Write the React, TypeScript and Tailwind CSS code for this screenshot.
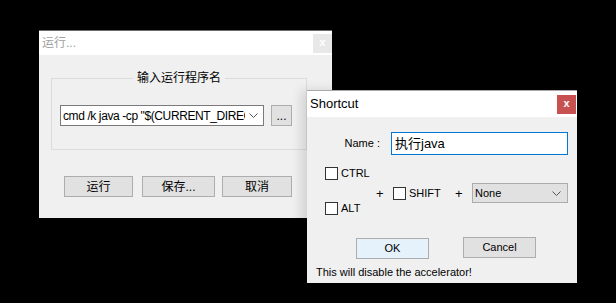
import { ReactNode } from "react"

const font = { fontFamily: '"Liberation Sans", "Noto Sans CJK SC", sans-serif' }

function Chevron() {
  return (
    <svg width="9" height="5" viewBox="0 0 9 5" className="shrink-0">
      <polyline points="0.5,0.5 4.5,4.5 8.5,0.5" fill="none" stroke="#555" strokeWidth="1" />
    </svg>
  )
}

function Checkbox({ label, labelWidth }: { label?: string; labelWidth?: string }) {
  return (
    <div className="flex items-center gap-[3px] shrink-0">
      <div className="w-[13px] h-[13px] bg-white border border-[#333] shrink-0" />
      {label && <span className={`text-[11px] leading-none text-black ${labelWidth ?? ""}`}>{label}</span>}
    </div>
  )
}

function WinButton({ children, className = "" }: { children: ReactNode; className?: string }) {
  return (
    <button
      className={`h-[21px] shrink-0 flex items-center justify-center bg-[#e1e1e1] border border-[#adadad] text-black leading-none ${className}`}
    >
      {children}
    </button>
  )
}

function RunDialog() {
  return (
    <div className="absolute left-[39px] top-[30px] w-[293px] h-[188px] bg-[#f0f0f0] border-t border-[#6b6b6b] flex flex-col">
      <div className="h-[24px] shrink-0 bg-white flex items-center justify-between pl-[3px]">
        <span className="text-[12px] text-[#a0a0a0]">运行...</span>
        <div className="w-[19px] h-[19px] bg-[#e8e8e8] flex items-center justify-center text-[11px] text-white font-bold leading-none pb-[2px]">
          x
        </div>
      </div>
      <div className="flex flex-col px-[12px] pt-[23px]">
        <div className="w-[256px] h-[72px] shrink-0 border border-[#dcdcdc] border-t-0">
          <div className="flex items-center -mt-[7px] h-[14px]">
            <div className="flex-1 border-t border-[#dcdcdc]" />
            <span className="px-[4px] text-[12px] leading-[14px] text-black">输入运行程序名</span>
            <div className="flex-1 border-t border-[#dcdcdc]" />
          </div>
          <div className="flex items-center gap-[7px] pl-[8px] pt-[20px]">
            <div className="w-[204px] h-[21px] bg-white border border-[#7a7a7a] flex items-center pl-[2px] pr-[5px] gap-[4px]">
              <span className="flex-1 overflow-hidden whitespace-nowrap text-[12px] leading-[16px] tracking-[-0.4px] text-black">
                cmd /k java -cp "$(CURRENT_DIRECTORY)"
              </span>
              <Chevron />
            </div>
            <WinButton className="w-[21px] text-[12px] items-end pb-[3px]">...</WinButton>
          </div>
        </div>
        <div className="flex items-center pl-[13px] pt-[26px] gap-[9px]">
          <WinButton className="w-[69px] text-[12px]">运行</WinButton>
          <WinButton className="w-[73px] text-[12px]">保存...</WinButton>
          <WinButton className="w-[70px] ml-[-2px] text-[12px]">取消</WinButton>
        </div>
      </div>
    </div>
  )
}

function ShortcutDialog() {
  return (
    <div className="absolute left-[307px] top-[90px] w-[270px] h-[193px] bg-[#f0f0f0] border-t border-[#a8a8a8] flex flex-col shadow-[-6px_0_10px_rgba(0,0,0,0.12)]">
      <div className="h-[26px] shrink-0 bg-white flex items-center justify-between pl-[3px] pr-[1px]">
        <span className="text-[13px] text-black">Shortcut</span>
        <div className="w-[19px] h-[19px] bg-[#c75050] flex items-center justify-center text-[11px] text-white font-bold leading-none pb-[2px]">
          x
        </div>
      </div>
      <div className="flex flex-col">
        <div className="flex items-center pt-[15px] h-[38px] shrink-0">
          <span className="w-[73px] text-right text-[11px] text-black leading-none">Name :</span>
          <div className="ml-[11px] w-[177px] h-[23px] bg-white border border-[#0078d7] flex items-center pl-[3px]">
            <span className="text-[13px] leading-none text-black">执行java</span>
          </div>
        </div>
        <div className="pl-[18px] pt-[12px] flex">
          <Checkbox label="CTRL" />
        </div>
        <div className="flex items-center h-[20px] mt-[3px] pl-[69px] shrink-0">
          <span className="text-[13px] leading-none text-black w-[17px]">+</span>
          <Checkbox label="SHIFT" labelWidth="w-[46px]" />
          <span className="text-[13px] leading-none text-black w-[17px]">+</span>
          <div className="w-[96px] h-[20px] bg-[#e1e1e1] border border-[#adadad] flex items-center justify-between pl-[2px] pr-[6px]">
            <span className="text-[11px] leading-none text-black">None</span>
            <Chevron />
          </div>
        </div>
        <div className="pl-[18px] -mt-[1px] flex">
          <Checkbox label="ALT" />
        </div>
        <div className="flex items-start pl-[49px] pt-[22px] gap-[34px]">
          <WinButton className="w-[73px] text-[11px] bg-[#e5f1fb] border-[#0078d7] mt-[1px]">OK</WinButton>
          <WinButton className="w-[73px] text-[11px]">Cancel</WinButton>
        </div>
        <div className="pl-[9px] pt-[6px] text-[11px] leading-[14px] text-black">
          This will disable the accelerator!
        </div>
      </div>
    </div>
  )
}

export default function App() {
  return (
    <div className="relative w-[616px] h-[303px] bg-black overflow-hidden" style={font}>
      <RunDialog />
      <ShortcutDialog />
    </div>
  )
}
